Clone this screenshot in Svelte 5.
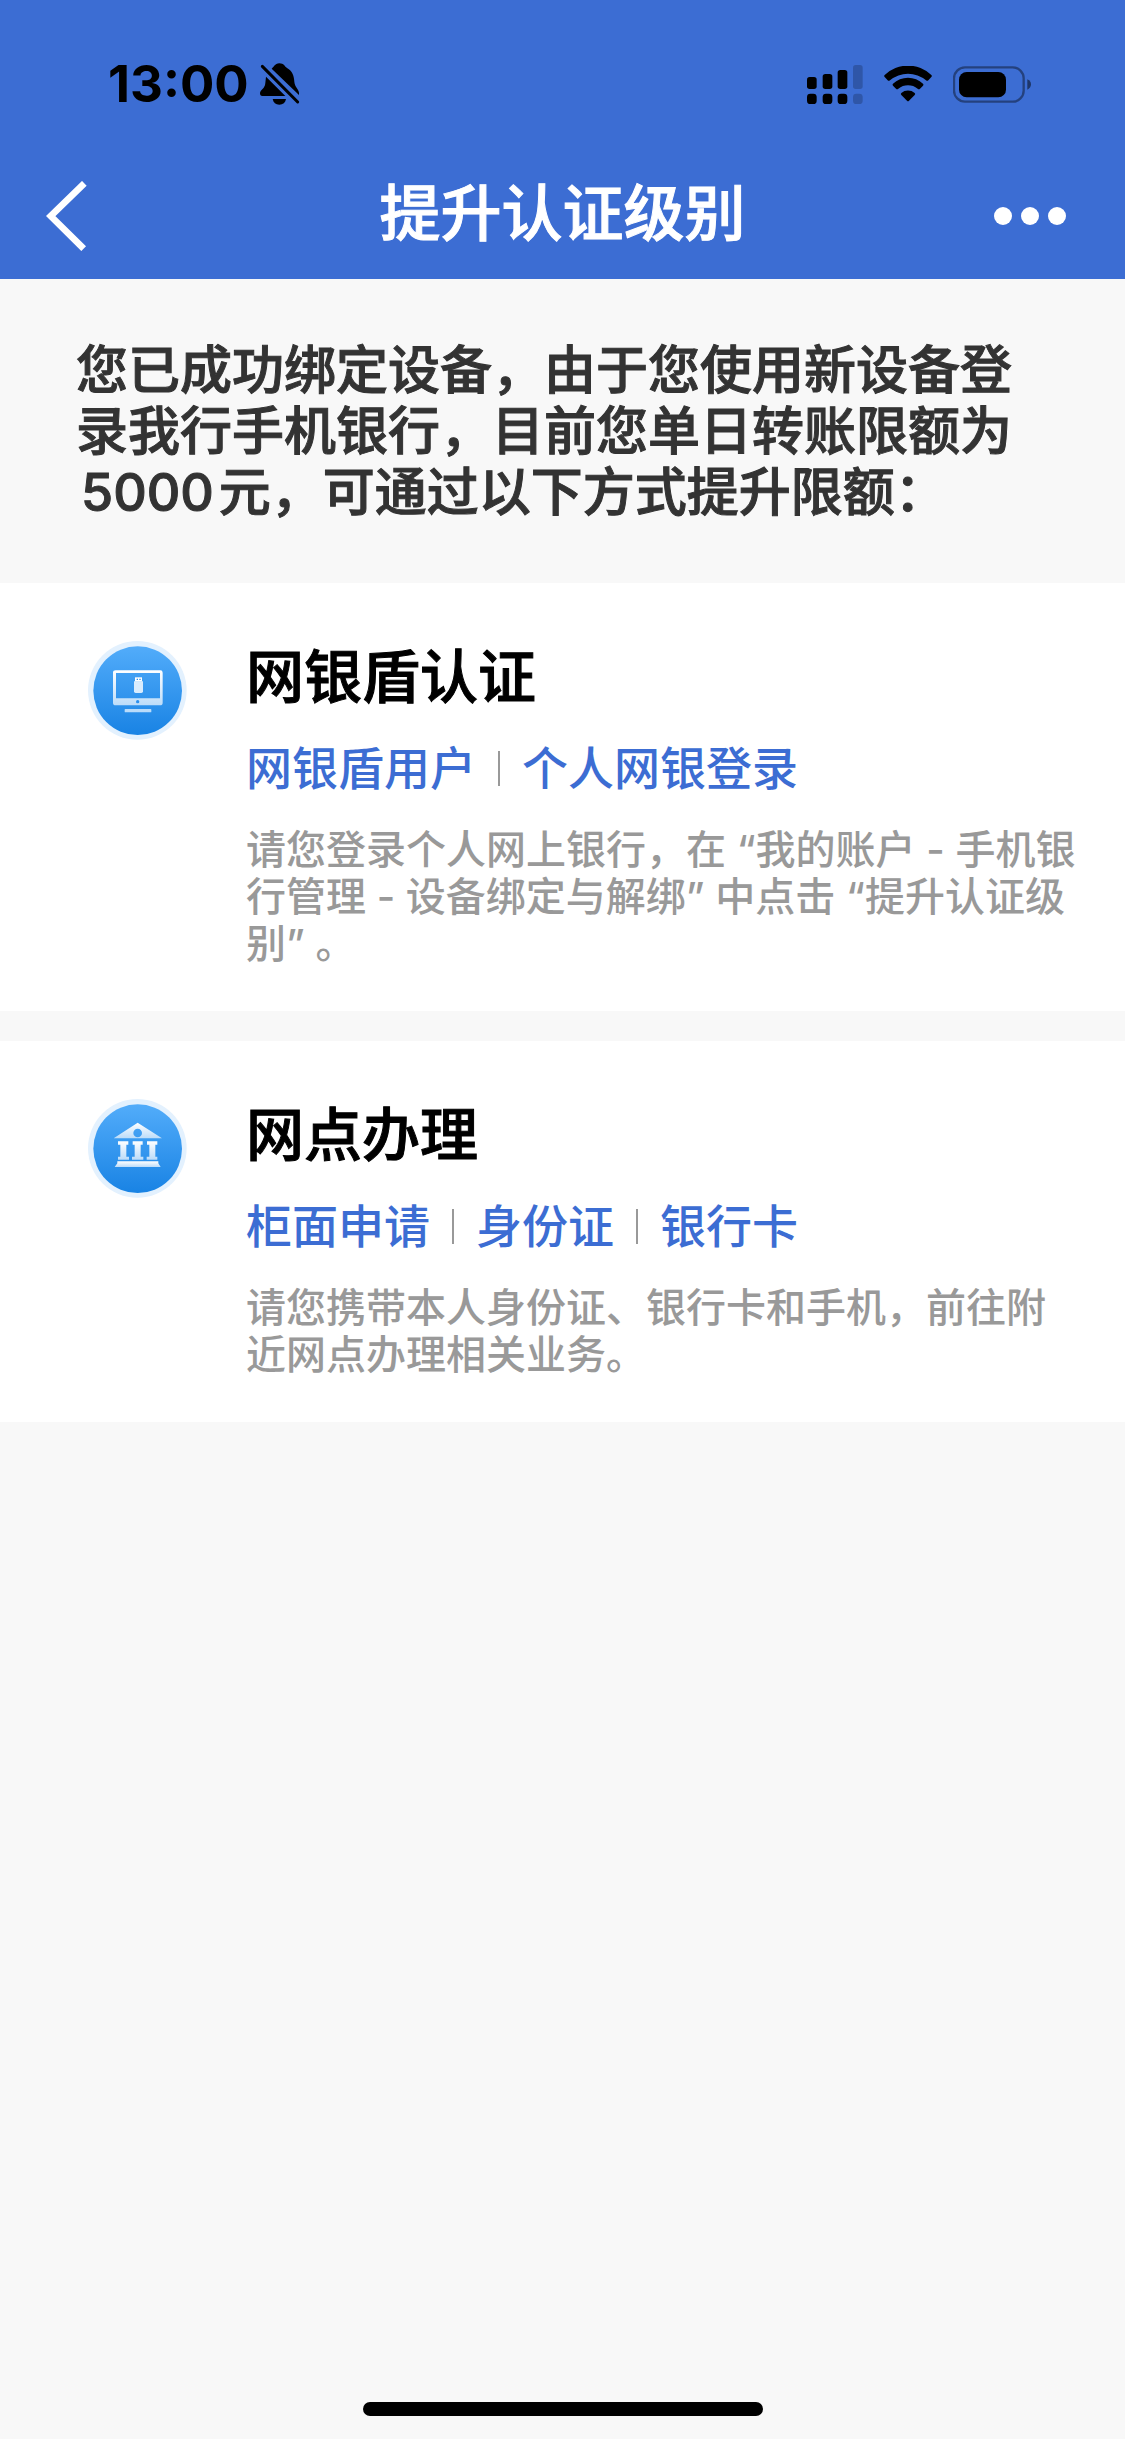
<script>
    const methods = [
        {
            icon: "shield",
            title: "网银盾认证",
            tags: ["网银盾用户", "个人网银登录"],
            description:
                "请您登录个人网上银行，在 “我的账户 - 手机银行管理 - 设备绑定与解绑” 中点击 “提升认证级别” 。",
        },
        {
            icon: "branch",
            title: "网点办理",
            tags: ["柜面申请", "身份证", "银行卡"],
            description:
                "请您携带本人身份证、银行卡和手机，前往附近网点办理相关业务。",
        },
    ];

    const signalBars = [
        { x: 0, y: 36, on: true },
        { x: 47, y: 27, on: true },
        { x: 92, y: 15, on: true },
        { x: 138, y: 0, on: false },
    ];
</script>

<div class="page">
    <header>
        <div class="status-bar">
            <div class="status-group clock">
                <time>13:00</time>
                <svg class="bell" viewBox="0 0 120 126" aria-hidden="true">
                    <path d="M35 17C41 14 44 1 58 1S74 11 81 15C97 24 102 38 103 56C104 72 117 78 117 90V96Z" />
                    <path d="M18 41L76 99H7C2 99 0 96 0 91C0 81 15 77 16 60Z" />
                    <path d="M38 108H78C76 119 69 125 58 125S40 119 38 108Z" />
                    <path d="M7 10L113 117" stroke="#000" stroke-width="9" stroke-linecap="round" />
                </svg>
            </div>
            <div class="status-group indicators">
                <svg class="signal" viewBox="0 0 168 117" aria-hidden="true">
                    {#each signalBars as bar}
                        <g opacity={bar.on ? 1 : 0.2}>
                            <rect x={bar.x} y={bar.y} width="29" height={72 - bar.y} rx="8" />
                            <rect x={bar.x} y="86" width="29" height="31" rx="10" />
                        </g>
                    {/each}
                </svg>
                <svg class="wifi" viewBox="0 0 144 108" aria-hidden="true">
                    <path d="M2 27A101 101 0 0 1 142 27Q145 30 142 33L133 43Q130 46 126 43A84 84 0 0 0 18 43Q14 46 11 43L2 33Q-1 30 2 27Z" />
                    <path d="M27 53A65 65 0 0 1 117 53Q120 56 117 59L108 68Q105 71 101 68A47 47 0 0 0 43 68Q39 71 36 68L27 59Q24 56 27 53Z" />
                    <path d="M52 81A31 31 0 0 1 92 81Q95 84 92 87L75 104Q72 107 69 104L52 87Q49 84 52 81Z" />
                </svg>
                <svg class="battery" viewBox="0 0 234 111" aria-hidden="true">
                    <rect x="3" y="4" width="209" height="103" rx="33" fill="none" stroke="#000" stroke-opacity="0.4" stroke-width="7" />
                    <rect x="18" y="18" width="141" height="76" rx="23" />
                    <path d="M223 40C231 43 234 49 234 55S231 68 223 71Z" opacity="0.5" />
                </svg>
            </div>
        </div>
        <nav>
            <button class="nav-button" aria-label="返回">
                <svg class="chevron" viewBox="0 0 123 210" aria-hidden="true">
                    <path d="M115 7L14 105L113 203" fill="none" stroke="#fff" stroke-width="20" />
                </svg>
            </button>
            <h1>提升认证级别</h1>
            <button class="nav-button more" aria-label="更多">
                <span class="dot"></span>
                <span class="dot"></span>
                <span class="dot"></span>
            </button>
        </nav>
    </header>

    <main>
        <p class="intro">
            您已成功绑定设备，由于您使用新设备登录我行手机银行，目前您单日转账限额为<span class="amount">5000</span>元，可通过以下方式提升限额：
        </p>

        <div class="methods">
            {#each methods as method}
                <section class="method">
                    <svg class="method-icon" viewBox="0 0 297 297" aria-hidden="true">
                        <defs>
                            <linearGradient id="disc-{method.icon}" x1="0" y1="0" x2="0" y2="1">
                                <stop offset="0" stop-color="#52acfa" />
                                <stop offset="1" stop-color="#1983e4" />
                            </linearGradient>
                            <linearGradient id="glyph-{method.icon}" x1="0" y1="0" x2="0" y2="1">
                                <stop offset="0" stop-color="#fff" />
                                <stop offset="1" stop-color="#bcdcf9" />
                            </linearGradient>
                        </defs>
                        <circle cx="148" cy="148" r="148" fill="#e3f1fe" />
                        <circle cx="149" cy="149" r="133" fill="url(#disc-{method.icon})" />
                        {#if method.icon === "shield"}
                            <path
                                fill="url(#glyph-shield)"
                                fill-rule="evenodd"
                                d="M83 88H217Q224 88 224 95V185Q224 193 216 193H83Q75 193 75 185V95Q75 88 83 88ZM84 96V172H216V96Z"
                            />
                            <circle cx="149" cy="182" r="5" fill="#2b90ee" />
                            <rect x="110" y="204" width="80" height="10" rx="2" fill="#b9dbfa" />
                            <path fill="#fff" d="M141 109H162V122H141Z" />
                            <path fill="#d9ecfd" d="M138 121H165V151Q165 156 160 156H143Q138 156 138 151Z" />
                            <path fill="#2b90ee" d="M146 113H150V117H146ZM154 113H158V117H154Z" />
                        {:else}
                            <g fill="url(#glyph-branch)">
                                <path
                                    fill-rule="evenodd"
                                    d="M149 71L222 118H77ZM149 89A13 13 0 1 0 149 115A13 13 0 1 0 149 89Z"
                                />
                                <path d="M90 127H121V137H115V173H123V182H90V173H97V137H90ZM134 127H164V137H158V173H166V182H132V173H140V137H134ZM177 127H208V137H202V173H208V182H176V173H184V137H177Z" />
                                <path d="M88 187H211V193L218 204H80L88 193Z" />
                            </g>
                        {/if}
                    </svg>
                    <div class="method-body">
                        <h2>{method.title}</h2>
                        <ul class="tags">
                            {#each method.tags as tag}
                                <li>{tag}</li>
                            {/each}
                        </ul>
                        <p class="description">{method.description}</p>
                    </div>
                </section>
            {/each}
        </div>
    </main>

    <div class="home-indicator"></div>
</div>

<style>
    :global(body) {
        margin: 0;
        background-color: #f8f8f8;
    }

    .page {
        display: flex;
        flex-direction: column;
        min-height: 100vh;
        background-color: #f8f8f8;
        font-family: "Inter", "Noto Sans CJK SC", sans-serif;
        font-weight: 500;
    }

    h1,
    h2,
    p,
    ul {
        margin: 0;
        padding: 0;
    }

    h1,
    h2,
    .intro {
        -webkit-text-stroke: 1px currentColor;
    }

    header {
        background-color: #3c6dd3;
    }

    .status-bar {
        display: flex;
        justify-content: space-between;
        align-items: center;
        height: 138px;
        padding: 15px 94px 0 108px;
    }

    .status-group {
        display: flex;
        align-items: center;
    }

    .clock {
        gap: 11px;
    }

    .indicators {
        gap: 21px;
    }

    time {
        font-size: 51px;
        line-height: 60px;
        font-weight: 700;
        color: #000;
    }

    .bell {
        width: 40px;
        height: 42px;
    }

    .signal {
        width: 56px;
        height: 39px;
    }

    .wifi {
        width: 48px;
        height: 36px;
    }

    .battery {
        width: 78px;
        height: 37px;
    }

    nav {
        display: grid;
        grid-template-columns: 1fr auto 1fr;
        align-items: center;
        height: 126px;
        padding: 0 46px;
    }

    .nav-button {
        display: flex;
        align-items: center;
        height: 90px;
        padding: 0;
        border: none;
        background: none;
        cursor: pointer;
    }

    .more {
        justify-content: flex-end;
        gap: 9px;
        padding-right: 13px;
    }

    .chevron {
        width: 41px;
        height: 70px;
    }

    .dot {
        width: 18px;
        height: 18px;
        border-radius: 50%;
        background-color: #fff;
    }

    h1 {
        padding-bottom: 5px;
        font-size: 61px;
        line-height: 80px;
        font-weight: 500;
        color: #fff;
    }

    .intro {
        padding: 61px 76px 60px;
        font-size: 52px;
        line-height: 61px;
        color: #333;
    }

    .amount {
        margin: 0 5px;
    }

    .methods {
        display: flex;
        flex-direction: column;
        gap: 30px;
    }

    .method {
        display: flex;
        gap: 59px;
        padding: 58px 44px 44px 88px;
        background-color: #fff;
    }

    .method-icon {
        flex: none;
        width: 99px;
        height: 99px;
    }

    .method-body {
        flex: 1;
    }

    h2 {
        font-size: 58px;
        line-height: 72px;
        font-weight: 500;
        color: #000;
    }

    .tags {
        display: flex;
        align-items: center;
        margin-top: 27px;
        list-style: none;
        font-size: 46px;
        line-height: 56px;
        color: #3c6dd3;
    }

    .tags li {
        display: flex;
        align-items: center;
    }

    .tags li + li::before {
        content: "";
        width: 2px;
        height: 35px;
        margin: 0 22px;
        background-color: #999;
    }

    .description {
        margin-top: 30px;
        font-size: 40px;
        line-height: 47px;
        color: #999;
    }

    .home-indicator {
        width: 400px;
        height: 14px;
        margin: auto auto 23px;
        border-radius: 7px;
        background-color: #000;
    }
</style>
